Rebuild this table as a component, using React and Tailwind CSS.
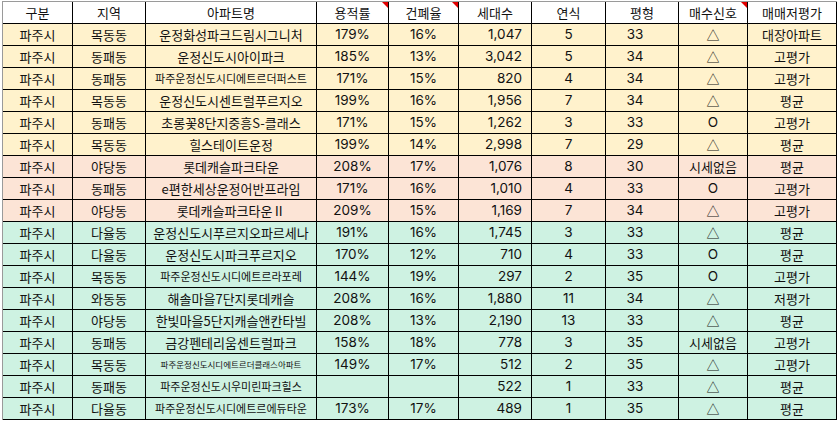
import React from "react";

const Y = "bg-[#fff2cc]";
const P = "bg-[#fce4d6]";
const G = "bg-[#cef2e2]";

const rows = [
  ["목동동", "운정화성파크드림시그니처", "", "179%", "16%", "1,047", "5", "33", "△", "대장아파트", Y],
  ["동패동", "운정신도시아이파크", "", "185%", "13%", "3,042", "5", "34", "△", "고평가", Y],
  ["동패동", "파주운정신도시디에트르더퍼스트", "s", "171%", "15%", "820", "4", "34", "△", "고평가", Y],
  ["목동동", "운정신도시센트럴푸르지오", "", "199%", "16%", "1,956", "7", "34", "△", "평균", Y],
  ["동패동", "초롱꽃8단지중흥S-클래스", "", "171%", "15%", "1,262", "3", "33", "O", "고평가", Y],
  ["목동동", "힐스테이트운정", "", "199%", "14%", "2,998", "7", "29", "△", "평균", Y],
  ["야당동", "롯데캐슬파크타운", "", "208%", "17%", "1,076", "8", "30", "시세없음", "평균", P],
  ["동패동", "e편한세상운정어반프라임", "", "171%", "16%", "1,010", "4", "33", "O", "고평가", P],
  ["야당동", "롯데캐슬파크타운Ⅱ", "", "209%", "15%", "1,169", "7", "34", "△", "고평가", P],
  ["다율동", "운정신도시푸르지오파르세나", "", "191%", "16%", "1,745", "3", "33", "△", "평균", G],
  ["다율동", "운정신도시파크푸르지오", "", "170%", "12%", "710", "4", "33", "O", "평균", G],
  ["목동동", "파주운정신도시디에트르라포레", "s", "144%", "19%", "297", "2", "35", "O", "고평가", G],
  ["와동동", "해솔마을7단지롯데캐슬", "", "208%", "16%", "1,880", "11", "34", "△", "저평가", G],
  ["야당동", "한빛마을5단지캐슬앤칸타빌", "", "208%", "13%", "2,190", "13", "33", "△", "평균", G],
  ["동패동", "금강펜테리움센트럴파크", "", "158%", "18%", "778", "3", "35", "시세없음", "고평가", G],
  ["목동동", "파주운정신도시디에트르더클래스아파트", "xs", "149%", "17%", "512", "2", "35", "△", "고평가", G],
  ["동패동", "파주운정신도시우미린파크힐스", "s", "", "", "522", "1", "33", "△", "평균", G],
  ["다율동", "파주운정신도시디에트르에듀타운", "s", "173%", "17%", "489", "1", "35", "△", "평균", G],
];

const cell = "h-[22px] border-r border-b border-black flex items-center shrink-0 overflow-hidden whitespace-nowrap";
const num = "font-['Inter','Noto_Sans_CJK_KR',sans-serif] text-[13.5px]";

function Tri() {
  return (
    <span className="absolute top-0 right-0 w-0 h-0 border-t-[6px] border-t-[#e00000] border-l-[6px] border-l-transparent" />
  );
}

export default function App() {
  return (
    <div className="w-[838px] h-[422px] bg-white pt-px pl-[2px] font-['Noto_Sans_CJK_KR',sans-serif] text-[13px] text-[#111]">
      <div className="w-[835px] border-l border-t border-[#9a9a9a]">
        <div className="flex bg-white">
          <div className={`${cell} h-[21px] w-[70px] justify-center`}>구분</div>
          <div className={`${cell} h-[21px] w-[73px] justify-center`}>지역</div>
          <div className={`${cell} h-[21px] w-[171px] justify-center`}>아파트명</div>
          <div className={`${cell} h-[21px] w-[72px] justify-center relative`}>용적률<Tri /></div>
          <div className={`${cell} h-[21px] w-[70px] justify-center relative`}>건폐율<Tri /></div>
          <div className={`${cell} h-[21px] w-[73px] justify-center`}>세대수</div>
          <div className={`${cell} h-[21px] w-[74px] justify-center`}>연식</div>
          <div className={`${cell} h-[21px] w-[73px] justify-center`}>평형</div>
          <div className={`${cell} h-[21px] w-[69px] justify-center relative`}>매수신호<Tri /></div>
          <div className={`${cell} h-[21px] w-[89px] justify-center`}>매매저평가</div>
        </div>
        {rows.map((r, i) => {
          const nameSize =
            r[2] === "xs" ? "text-[8.5px]" : r[2] === "s" ? "text-[11px]" : "text-[13px]";
          return (
            <div key={i} className={`flex ${r[10]}`}>
              <div className={`${cell} w-[70px] justify-center`}>파주시</div>
              <div className={`${cell} w-[73px] justify-center`}>{r[0]}</div>
              <div className={`${cell} w-[171px] justify-center ${nameSize}`}>{r[1]}</div>
              <div className={`${cell} w-[72px] justify-center ${num}`}>{r[3]}</div>
              <div className={`${cell} w-[70px] justify-center ${num}`}>{r[4]}</div>
              <div className={`${cell} w-[73px] justify-end pr-[9px] ${num}`}>{r[5]}</div>
              <div className={`${cell} w-[74px] justify-center ${num}`}>{r[6]}</div>
              <div className={`${cell} w-[73px] justify-center pr-[14px] ${num}`}>{r[7]}</div>
              <div className={`${cell} w-[69px] justify-center ${r[8] === "O" ? num : ""}`}>{r[8]}</div>
              <div className={`${cell} w-[89px] justify-center`}>{r[9]}</div>
            </div>
          );
        })}
      </div>
    </div>
  );
}
